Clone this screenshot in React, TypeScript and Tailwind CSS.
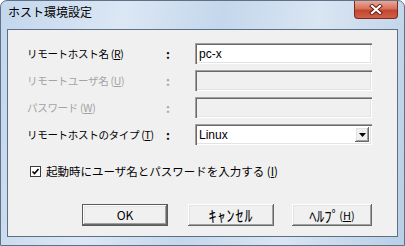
import React from 'react';

const jp = "font-['Noto_Sans_CJK_JP',sans-serif]";

const sunken =
  'shadow-[inset_1px_1px_0_#a0a0a0,inset_2px_2px_0_#696969,inset_-1px_-1px_0_#ffffff,inset_-2px_-2px_0_#e3e3e3]';
const raised =
  'shadow-[inset_-1px_-1px_0_#696969,inset_1px_1px_0_#ffffff,inset_-2px_-2px_0_#a0a0a0,inset_2px_2px_0_#e3e3e3]';

interface FieldRowProps {
  label: string;
  mnemonic: string;
  disabled?: boolean;
  children: React.ReactNode;
}

const FieldRow = ({ label, mnemonic, disabled, children }: FieldRowProps) => {
  const color = disabled ? 'text-[#a3a3a3]' : 'text-black';
  return (
    <div className="flex h-[21px] items-center pl-[19px]">
      <div className={`w-[139px] whitespace-pre text-[10.5px] leading-none tracking-[-0.3px] ${color} ${jp} pt-[2px]`}>
        {label} (<span className="underline underline-offset-1">{mnemonic}</span>)
      </div>
      <div className={`w-[29px] text-[12px] font-semibold leading-none ${color} ${jp}`}>:</div>
      {children}
    </div>
  );
};

const TextBox = ({ value, disabled }: { value?: string; disabled?: boolean }) => (
  <div
    className={`flex h-[21px] w-[177px] items-center pl-[4px] ${sunken} ${
      disabled ? 'bg-[#f0f0f0]' : 'bg-white'
    }`}
  >
    <span className="font-['Liberation_Sans',sans-serif] text-[12px] leading-none text-black">{value}</span>
  </div>
);

const Button = ({ children, width, isDefault }: { children: React.ReactNode; width: string; isDefault?: boolean }) => (
  <div
    className={`flex h-[22px] ${width} items-center justify-center bg-[#f0f0f0] ${
      isDefault ? 'border border-[#5a5a5a]' : ''
    } ${raised}`}
  >
    {children}
  </div>
);

export default function App() {
  return (
    <div className="h-[246px] w-[405px] overflow-hidden bg-white">
      <div className="flex h-[246px] w-[405px] flex-col rounded-t-[7px] border border-[#5f7186] bg-[linear-gradient(100deg,#c3d6ec_0%,#dbe7f4_28%,#c4d7ec_50%,#d9e5f2_72%,#b9cfe7_100%)]">
        {/* Title bar */}
        <div className="flex h-[28px] shrink-0 items-start justify-between">
          <div className={`pl-[7px] pt-[5px] text-[12px] leading-none text-black ${jp}`}>ホスト環境設定</div>
          <div className="mr-[6px] flex h-[18px] w-[44px] items-center justify-center rounded-b-[4px] border border-t-0 border-[#7a2b20] bg-[linear-gradient(#eaa898,#d8715c_45%,#c4462f_55%,#d06049)]">
            <svg width="14" height="11" viewBox="0 0 14 11">
              <path d="M3 2 L11 9 M11 2 L3 9" stroke="#5b1c12" strokeWidth="4" strokeLinecap="square" />
              <path d="M3 2 L11 9 M11 2 L3 9" stroke="#ffffff" strokeWidth="2.2" strokeLinecap="square" />
            </svg>
          </div>
        </div>

        {/* Client area */}
        <div className="mx-[6px] mb-[8px] flex flex-1 flex-col border border-[#5d6f85] bg-[#f0f0f0] pt-[13px]">
          <div className="flex flex-col gap-[6px]">
            <FieldRow label="リモートホスト名" mnemonic="R">
              <TextBox value="pc-x" />
            </FieldRow>
            <FieldRow label="リモートユーザ名" mnemonic="U" disabled>
              <TextBox disabled />
            </FieldRow>
            <FieldRow label="パスワード" mnemonic="W" disabled>
              <TextBox disabled />
            </FieldRow>
            <FieldRow label="リモートホストのタイプ" mnemonic="T">
              <div className={`flex h-[21px] w-[177px] items-center justify-between bg-white pl-[4px] pr-[3px] ${sunken}`}>
                <span className="font-['Liberation_Sans',sans-serif] text-[12px] leading-none text-black">Linux</span>
                <div className={`flex h-[15px] w-[14px] items-center justify-center bg-[#f0f0f0] ${raised}`}>
                  <svg width="7" height="4" viewBox="0 0 7 4">
                    <path d="M0 0 H7 L3.5 4 Z" fill="#000" />
                  </svg>
                </div>
              </div>
            </FieldRow>
          </div>

          {/* Checkbox */}
          <div className="mt-[20px] flex h-[13px] items-center pl-[22px]">
            <div className="flex h-[11px] w-[11px] items-center justify-center border border-[#3c3c3c] bg-white">
              <svg width="9" height="9" viewBox="0 0 9 9">
                <path d="M1.5 4.5 L3.5 6.5 L7.5 2" stroke="#000" strokeWidth="1.6" fill="none" />
              </svg>
            </div>
            <span className={`ml-[5px] whitespace-pre pt-[1px] text-[11.5px] leading-none text-black ${jp}`}>
              起動時にユーザ名とパスワードを入力する (<span className="underline underline-offset-1">I</span>)
            </span>
          </div>

          {/* Buttons */}
          <div className="mt-[26px] flex items-center pl-[74px]">
            <Button width="w-[86px]" isDefault>
              <span className={`text-[12px] leading-none text-black ${jp}`}>OK</span>
            </Button>
            <div className="w-[20px]" />
            <Button width="w-[86px]">
              <span className={`text-[16px] leading-none tracking-[1px] text-black ${jp}`}>ｷｬﾝｾﾙ</span>
            </Button>
            <div className="w-[18px]" />
            <Button width="w-[80px]">
              <span className={`text-[15px] leading-none text-black ${jp}`}>ﾍﾙﾌﾟ</span>
              <span className={`text-[11px] leading-none text-black ${jp}`}>
                (<span className="underline underline-offset-1">H</span>)
              </span>
            </Button>
          </div>
        </div>
      </div>
    </div>
  );
}
